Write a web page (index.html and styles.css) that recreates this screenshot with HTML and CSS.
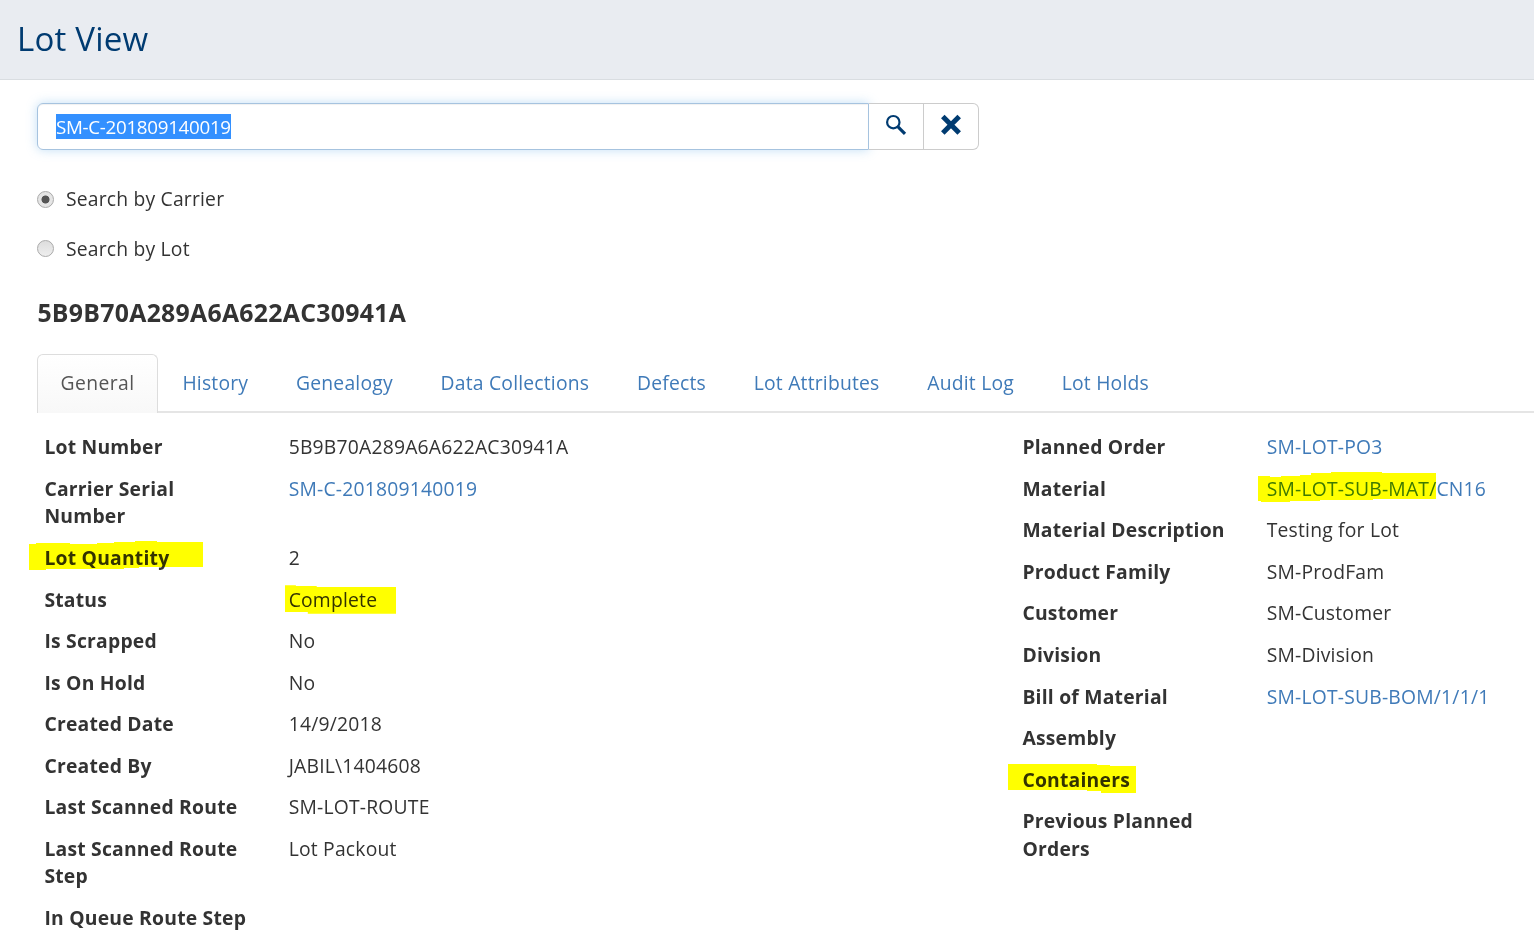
FILE: index.html
```html
<!DOCTYPE html>
<html lang="en">
<head>
<meta charset="utf-8">
<title>Lot View</title>
<link rel="stylesheet" href="styles.css">
</head>
<body>
<header class="page-header"><h1 class="page-title">Lot View</h1></header>
<main class="content">
  <div class="search">
    <div class="search-input"><span class="selected">SM-C-201809140019</span></div>
    <button class="search-button" aria-label="Search"><svg class="icon" viewBox="0 0 24 24"><circle cx="9.3" cy="9.2" r="6.2" fill="none" stroke="#003b71" stroke-width="2.2"/><path d="M13.8 13.7L21 20.8" stroke="#003b71" stroke-width="3.2"/></svg></button>
    <button class="search-button search-clear" aria-label="Clear"><svg class="icon" viewBox="0 0 24 24"><path d="M3.8 3.6L20.2 20M20.2 3.6L3.8 20" stroke="#003b71" stroke-width="5"/></svg></button>
  </div>
  <div class="options">
    <label class="option"><span class="radio radio-on"></span>Search by Carrier</label>
    <label class="option"><span class="radio"></span>Search by Lot</label>
  </div>
  <h2 class="lot-title">5B9B70A289A6A622AC30941A</h2>
  <nav class="tabs">
    <a class="tab tab-active">General</a><a class="tab">History</a><a class="tab">Genealogy</a><a class="tab">Data Collections</a><a class="tab">Defects</a><a class="tab">Lot Attributes</a><a class="tab">Audit Log</a><a class="tab">Lot Holds</a>
  </nav>
  <div class="details">
    <dl class="list">
      <div class="row"><dt>Lot Number</dt><dd>5B9B70A289A6A622AC30941A</dd></div>
      <div class="row"><dt>Carrier Serial Number</dt><dd><a class="link">SM-C-201809140019</a></dd></div>
      <div class="row"><dt><span class="marked">Lot Quantity<svg class="mark mark-quantity" viewBox="0 0 174 30"><path d="M0 4H7V3H41V4H68V3H85V2H106V1H128V2H174V27H110V28H95V29H17V30H0Z"/></svg></span></dt><dd>2</dd></div>
      <div class="row"><dt>Status</dt><dd><span class="marked">Complete<svg class="mark mark-status" viewBox="0 0 112 29"><path d="M0 0H11V1H32V2H112V29H23V27H0Z"/></svg></span></dd></div>
      <div class="row"><dt>Is Scrapped</dt><dd>No</dd></div>
      <div class="row"><dt>Is On Hold</dt><dd>No</dd></div>
      <div class="row"><dt>Created Date</dt><dd>14/9/2018</dd></div>
      <div class="row"><dt>Created By</dt><dd>JABIL\1404608</dd></div>
      <div class="row"><dt>Last Scanned Route</dt><dd>SM-LOT-ROUTE</dd></div>
      <div class="row"><dt>Last Scanned Route Step</dt><dd>Lot Packout</dd></div>
      <div class="row"><dt>In Queue Route Step</dt><dd></dd></div>
    </dl>
    <dl class="list">
      <div class="row"><dt>Planned Order</dt><dd><a class="link">SM-LOT-PO3</a></dd></div>
      <div class="row"><dt>Material</dt><dd><a class="link marked">SM-LOT-SUB-MAT/CN16<svg class="mark mark-material" viewBox="0 0 178 31"><path d="M0 4H12V5H23V4H42V3H53V1H73V0H124V1H178V27H115V28H62V29H32V30H3V29H0Z"/></svg></a></dd></div>
      <div class="row"><dt>Material Description</dt><dd>Testing for Lot</dd></div>
      <div class="row"><dt>Product Family</dt><dd>SM-ProdFam</dd></div>
      <div class="row"><dt>Customer</dt><dd>SM-Customer</dd></div>
      <div class="row"><dt>Division</dt><dd>SM-Division</dd></div>
      <div class="row"><dt>Bill of Material</dt><dd><a class="link">SM-LOT-SUB-BOM/1/1/1</a></dd></div>
      <div class="row"><dt>Assembly</dt><dd></dd></div>
      <div class="row"><dt><span class="marked">Containers<svg class="mark mark-containers" viewBox="0 0 128 29"><path d="M0 0H89V1H102V2H128V29H93V27H79V26H0Z"/></svg></span></dt><dd></dd></div>
      <div class="row"><dt>Previous Planned Orders</dt><dd></dd></div>
    </dl>
  </div>
</main>
</body>
</html>
```
FILE: styles.css
```css
* { box-sizing: border-box; }
body { margin: 0; height: 944px; overflow: hidden; background: #fff; color: #333; font: 19.32px/27.6px "Open Sans", "Noto Sans", sans-serif; letter-spacing: .2px; }
.page-header { height: 80px; padding: 16px 17px 0; background: #e9ecf1; border-bottom: 1px solid #d9dde1; }
.page-title { margin: 0; font-size: 33.1px; line-height: 45px; font-weight: 400; color: #003b71; }
.content { padding: 22.5px 0 0 37.4px; }
.search { display: flex; width: 941.5px; height: 47.5px; }
.search-input { width: 831.5px; padding: 9px 17.5px; border: 1.5px solid #a6c3df; border-radius: 6px 0 0 6px; box-shadow: 0 0 11px rgba(102, 175, 233, .4), inset 0 1px 1px rgba(0, 0, 0, .06); }
.selected { display: inline-block; height: 25px; line-height: 26px; font-size: 18.8px; letter-spacing: -.3px; background: #3390ff; color: #fff; }
.search-button { width: 55px; padding: 0; border: 1.5px solid #ccc; border-left: 0; background: #fff; }
.search-clear { border-radius: 0 6px 6px 0; }
.icon { display: block; width: 24px; height: 24px; margin: -2px auto 0; }
.options { padding-top: 24px; }
.option { display: flex; align-items: center; height: 50px; gap: 11.5px; }
.radio { width: 17px; height: 17px; margin-top: -1px; border: 1.5px solid #aaa; border-radius: 50%; background: linear-gradient(#ddd, #eee); }
.radio-on { margin-top: 0; background: radial-gradient(circle, #555 0 3.6px, #e5e5e5 4.4px); }
.lot-title { margin: 21px 0 0; font-size: 24.84px; line-height: 34px; font-weight: 700; letter-spacing: .28px; }
.tabs { display: flex; height: 59px; margin-top: 25px; border-bottom: 2px solid #e5e5e5; }
.tab { height: 57px; padding: 14px 22px; margin-right: 1.8px; line-height: 28px; border: 1.5px solid transparent; color: #3f7ab8; white-space: nowrap; }
.tab-active { height: 59px; color: #555; font-weight: 500; letter-spacing: .45px; border-color: #ddd; border-bottom: 0; border-radius: 6px 6px 0 0; background: linear-gradient(#fff, #f8f8f8); }
.details { display: grid; grid-template-columns: 978px 1fr; padding: 13.4px 0 0 7px; }
.list { margin: 0; }
.row { display: grid; grid-template-columns: 244.3px 1fr; padding: 6.97px 0; }
dt { padding-right: 38px; font-weight: 700; letter-spacing: .22px; }
dd { margin: 0; white-space: nowrap; }
.link { color: #3f7ab8; }
.marked { position: relative; }
.mark { position: absolute; fill: #ff0; mix-blend-mode: multiply; }
.mark-quantity { left: -15.5px; top: -4px; width: 174px; height: 30px; }
.mark-status { left: -4px; top: -1px; width: 111px; height: 29px; }
.mark-material { left: -9px; top: -3px; width: 178px; height: 31px; }
.mark-containers { left: -14.5px; top: -2px; width: 128px; height: 29px; }
```
